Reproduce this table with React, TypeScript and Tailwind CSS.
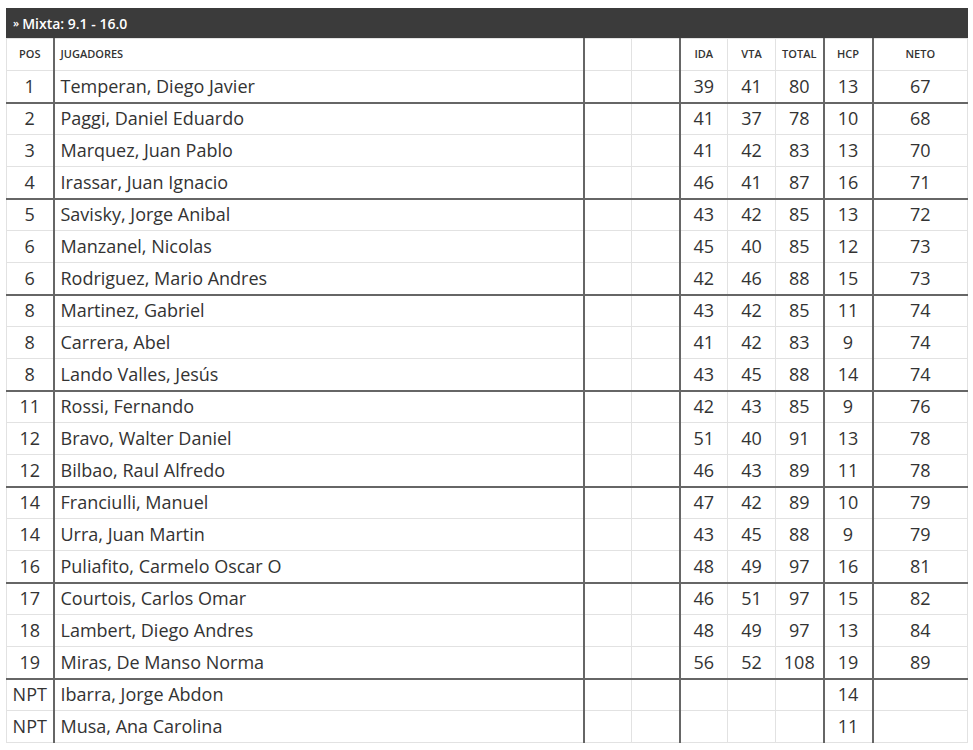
import React from 'react';

type Row = {
  pos: string;
  name: string;
  ida?: number;
  vta?: number;
  total?: number;
  hcp: number;
  neto?: number;
};

const rows: Row[] = [
  { pos: '1', name: 'Temperan, Diego Javier', ida: 39, vta: 41, total: 80, hcp: 13, neto: 67 },
  { pos: '2', name: 'Paggi, Daniel Eduardo', ida: 41, vta: 37, total: 78, hcp: 10, neto: 68 },
  { pos: '3', name: 'Marquez, Juan Pablo', ida: 41, vta: 42, total: 83, hcp: 13, neto: 70 },
  { pos: '4', name: 'Irassar, Juan Ignacio', ida: 46, vta: 41, total: 87, hcp: 16, neto: 71 },
  { pos: '5', name: 'Savisky, Jorge Anibal', ida: 43, vta: 42, total: 85, hcp: 13, neto: 72 },
  { pos: '6', name: 'Manzanel, Nicolas', ida: 45, vta: 40, total: 85, hcp: 12, neto: 73 },
  { pos: '6', name: 'Rodriguez, Mario Andres', ida: 42, vta: 46, total: 88, hcp: 15, neto: 73 },
  { pos: '8', name: 'Martinez, Gabriel', ida: 43, vta: 42, total: 85, hcp: 11, neto: 74 },
  { pos: '8', name: 'Carrera, Abel', ida: 41, vta: 42, total: 83, hcp: 9, neto: 74 },
  { pos: '8', name: 'Lando Valles, Jesús', ida: 43, vta: 45, total: 88, hcp: 14, neto: 74 },
  { pos: '11', name: 'Rossi, Fernando', ida: 42, vta: 43, total: 85, hcp: 9, neto: 76 },
  { pos: '12', name: 'Bravo, Walter Daniel', ida: 51, vta: 40, total: 91, hcp: 13, neto: 78 },
  { pos: '12', name: 'Bilbao, Raul Alfredo', ida: 46, vta: 43, total: 89, hcp: 11, neto: 78 },
  { pos: '14', name: 'Franciulli, Manuel', ida: 47, vta: 42, total: 89, hcp: 10, neto: 79 },
  { pos: '14', name: 'Urra, Juan Martin', ida: 43, vta: 45, total: 88, hcp: 9, neto: 79 },
  { pos: '16', name: 'Puliafito, Carmelo Oscar O', ida: 48, vta: 49, total: 97, hcp: 16, neto: 81 },
  { pos: '17', name: 'Courtois, Carlos Omar', ida: 46, vta: 51, total: 97, hcp: 15, neto: 82 },
  { pos: '18', name: 'Lambert, Diego Andres', ida: 48, vta: 49, total: 97, hcp: 13, neto: 84 },
  { pos: '19', name: 'Miras, De Manso Norma', ida: 56, vta: 52, total: 108, hcp: 19, neto: 89 },
  { pos: 'NPT', name: 'Ibarra, Jorge Abdon', hcp: 14 },
  { pos: 'NPT', name: 'Musa, Ana Carolina', hcp: 11 },
];

// thick separator below these row indexes
const groupEnds = [0, 3, 6, 9, 12, 15, 18];

function App() {
  return (
    <div className="min-h-screen bg-white pt-2 pl-[6px] text-[#333] font-['Open_Sans','Liberation_Sans',sans-serif]">
      <div className="w-[962px]">
        {/* Category title */}
        <div className="h-[30px] bg-[#3b3b3b] text-white text-[14px] font-semibold flex items-center pl-[7px]">
          <span className="text-[11px] mr-[3px]">»</span>Mixta: 9.1 - 16.0
        </div>

        <table className="w-full table-fixed border-collapse">
          <colgroup>
            <col className="w-[47px]" />
            <col className="w-[530px]" />
            <col className="w-[48px]" />
            <col className="w-[48px]" />
            <col className="w-[48px]" />
            <col className="w-[48px]" />
            <col className="w-[48px]" />
            <col className="w-[49px]" />
            <col />
          </colgroup>
          <thead>
            <tr className="h-[32px] text-[11px] font-semibold">
              <th className="border border-[#e2e2e2] font-semibold">POS</th>
              <th className="border border-[#e2e2e2] border-l-2 border-l-[#666] text-left pl-[6px] font-semibold">JUGADORES</th>
              <th className="border border-[#e2e2e2] border-l-2 border-l-[#666]"></th>
              <th className="border border-[#e2e2e2]"></th>
              <th className="border border-[#e2e2e2] border-l-2 border-l-[#666] font-semibold">IDA</th>
              <th className="border border-[#e2e2e2] font-semibold">VTA</th>
              <th className="border border-[#e2e2e2] font-semibold">TOTAL</th>
              <th className="border border-[#e2e2e2] border-l-2 border-l-[#666] font-semibold">HCP</th>
              <th className="border border-[#e2e2e2] border-l-2 border-l-[#666] font-semibold">NETO</th>
            </tr>
          </thead>
          <tbody>
            {rows.map((r, i) => {
              const thick = groupEnds.includes(i);
              const b = thick
                ? 'border border-[#e2e2e2] border-b-2 border-b-[#666]'
                : 'border border-[#e2e2e2]';
              return (
                <tr key={i} className="h-[32px] text-[18px]">
                  <td className={`${b} text-center`}>{r.pos}</td>
                  <td className={`${b} border-l-2 border-l-[#666] pl-[6px]`}>{r.name}</td>
                  <td className={`${b} border-l-2 border-l-[#666]`}></td>
                  <td className={b}></td>
                  <td className={`${b} border-l-2 border-l-[#666] text-center`}>{r.ida}</td>
                  <td className={`${b} text-center`}>{r.vta}</td>
                  <td className={`${b} text-center`}>{r.total}</td>
                  <td className={`${b} border-l-2 border-l-[#666] text-center`}>{r.hcp}</td>
                  <td className={`${b} border-l-2 border-l-[#666] text-center`}>{r.neto}</td>
                </tr>
              );
            })}
          </tbody>
        </table>
      </div>
    </div>
  );
}

export default App;
